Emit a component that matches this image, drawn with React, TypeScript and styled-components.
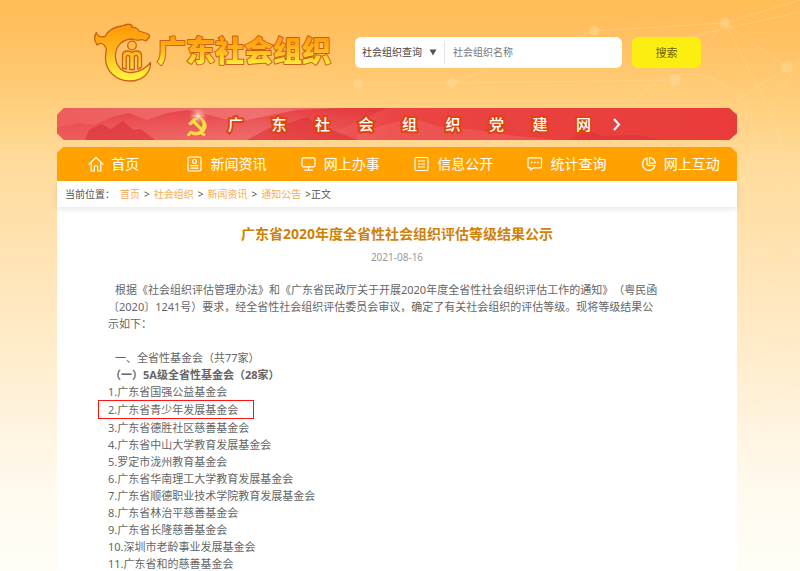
import React from "react";
import styled, { createGlobalStyle } from "styled-components";

const GlobalStyle = createGlobalStyle`
  * { box-sizing: border-box; }
  body {
    margin: 0;
    font-family: "Noto Sans", "Noto Sans CJK SC", sans-serif;
    color: #666;
    text-spacing-trim: space-all;
  }
  h1, h2, p, ol, ul { margin: 0; padding: 0; }
  ol, ul { list-style: none; }
  a { text-decoration: none; color: inherit; }
`;

const Page = styled.div`
  position: relative;
  min-height: 100vh;
  padding: 0 6px 0 0;
  background: linear-gradient(#ffbd56 0, #ffc266 50px, #ffd180 110px, #ffdc9e 170px, #ffe6bc 290px, #fff1d8 400px, #fffaee 490px, #fffdf6 571px);
`;

const Backdrop = styled.svg`
  position: absolute;
  top: 0;
  right: 0;
  width: 460px;
  height: 480px;
  pointer-events: none;
`;

const Column = styled.div`
  position: relative;
  width: 86%;
  max-width: 680px;
  margin: 0 auto;
`;

const Header = styled.header`
  display: flex;
  align-items: center;
  height: 108px;
  padding: 0 36px 4px;
`;

const Brand = styled.a`
  display: flex;
  align-items: center;
  gap: 4px;
  flex: none;
`;

const BrandName = styled.h1`
  display: flex;
  height: 42px;
`;

const BrandLettering = styled.svg`
  overflow: visible;
  font-family: "Noto Sans CJK SC", sans-serif;
  font-size: 29px;
  font-weight: 900;
  fill: url(#lettering);
  stroke: #cb6117;
  stroke-width: 2px;
  stroke-linejoin: round;
  paint-order: stroke fill;
`;

const SearchForm = styled.form`
  display: flex;
  flex: 1;
  gap: 10px;
  margin-left: 24px;
  height: 31px;
`;

const SearchBox = styled.div`
  display: flex;
  align-items: center;
  flex: 1;
  min-width: 0;
  background: #fff;
  border-radius: 6px;
`;

const ScopeField = styled.label`
  display: flex;
  align-items: center;
  position: relative;
  height: 23px;
  border-right: 1px solid #e4e4e4;
`;

const ScopeSelect = styled.select`
  appearance: none;
  width: 89px;
  height: 23px;
  padding: 0 20px 0 7px;
  border: 0;
  background: transparent;
  color: #444;
  font: inherit;
  font-size: 10px;
`;

const ScopeArrow = styled.svg`
  position: absolute;
  right: 7px;
  pointer-events: none;
`;

const Keyword = styled.input`
  flex: 1;
  min-width: 0;
  height: 23px;
  padding: 0 8px;
  border: 0;
  background: transparent;
  font: inherit;
  font-size: 10px;
  color: #444;
  &::placeholder { color: #777; opacity: 1; }
`;

const SearchButton = styled.button`
  width: 69px;
  border: 0;
  border-radius: 6px;
  background: #fdee12;
  color: #6e6410;
  font: inherit;
  font-size: 11px;
`;

const PartyBanner = styled.a`
  position: relative;
  display: flex;
  align-items: center;
  gap: 19px;
  height: 32px;
  padding-left: 129px;
  overflow: hidden;
  background: #ea3f3d;
  clip-path: polygon(7px 0, calc(100% - 8px) 0, 100% 7px, 100% calc(100% - 7px), calc(100% - 8px) 100%, 7px 100%, 0 calc(100% - 7px), 0 7px);
`;

const Mountains = styled.svg`
  position: absolute;
  inset: 0;
  width: 100%;
  height: 100%;
`;

const Emblem = styled.svg`
  position: relative;
  flex: none;
`;

const BannerText = styled.span`
  position: relative;
  display: flex;
  justify-content: space-between;
  width: 363px;
  font-size: 15px;
  line-height: 34px;
  font-weight: 500;
  font-family: "Noto Sans CJK SC", sans-serif;
  color: #fff;
  -webkit-text-stroke: 4px #e0440c;
  paint-order: stroke fill;
`;

const MainNav = styled.nav`
  display: grid;
  grid-template-columns: repeat(6, 1fr);
  height: 34px;
  margin-top: 7px;
  background: #ffa200;
  clip-path: polygon(6px 0, calc(100% - 6px) 0, 100% 6px, 100% 100%, 0 100%, 0 6px);
`;

const NavLink = styled.a`
  display: flex;
  align-items: center;
  justify-content: center;
  gap: 7px;
  color: #fff;
  font-size: 14px;
  line-height: 34px;
  white-space: nowrap;
`;

const NavIcon = styled.svg`
  flex: none;
  fill: none;
  stroke: #fff;
  stroke-width: 1.2;
  stroke-linecap: round;
  stroke-linejoin: round;
`;

const Breadcrumb = styled.nav`
  position: relative;
  display: flex;
  gap: 4px;
  height: 26px;
  padding: 0 8px;
  background: #fff;
  box-shadow: 0 2px 6px rgba(0, 0, 0, 0.1);
  font-size: 10px;
  line-height: 27px;
  color: #555;
`;

const Crumb = styled.a`
  color: #f5ad55;
`;

const Here = styled.span`
  margin-right: 1px;
`;

const Article = styled.article`
  padding: 16px 51px 0;
  background: #fff;
`;

const Title = styled.h2`
  font-size: 14px;
  line-height: 22px;
  font-weight: 700;
  text-align: center;
  color: #cf8108;
`;

const PostDate = styled.time`
  display: block;
  margin-top: 4px;
  font-size: 10px;
  line-height: 16px;
  text-align: center;
  color: #999;
`;

const Body = styled.div`
  margin-top: 16px;
  font-size: 11px;
  line-height: 17px;
  color: #666;
`;

const Paragraph = styled.p<{ $lead?: boolean }>`
  text-indent: 7px;
  margin-bottom: ${(p) => (p.$lead ? "17px" : "0")};
`;

const SectionName = styled.p`
  text-indent: 2px;
  font-weight: 700;
`;

const Entry = styled.li``;

const MarkedEntry = styled.li`
  width: 156px;
  margin-left: -10px;
  padding-left: 9px;
  border: 1px solid #ff1414;
`;

const foundations = [
  "广东省国强公益基金会",
  "广东省青少年发展基金会",
  "广东省德胜社区慈善基金会",
  "广东省中山大学教育发展基金会",
  "罗定市泷州教育基金会",
  "广东省华南理工大学教育发展基金会",
  "广东省顺德职业技术学院教育发展基金会",
  "广东省林治平慈善基金会",
  "广东省长隆慈善基金会",
  "深圳市老龄事业发展基金会",
  "广东省和的慈善基金会",
];

const navItems = [
  {
    label: "首页",
    icon: <path d="M1 8.2 8 1.5l7 6.7M3.2 6.8V15h3.2v-5h3.2v5h3.2V6.8" />,
  },
  {
    label: "新闻资讯",
    icon: (
      <>
        <rect x="1" y="1" width="13" height="14" rx="1.5" />
        <circle cx="7.5" cy="5.4" r="1.9" />
        <path d="M4 9.7h7M4 12.2h7" />
      </>
    ),
  },
  {
    label: "网上办事",
    icon: (
      <>
        <rect x="1" y="1.8" width="13" height="9" rx="1.5" />
        <path d="M7.5 11v3M3.7 14.2h7.6" />
      </>
    ),
  },
  {
    label: "信息公开",
    icon: (
      <>
        <rect x="1" y="1.5" width="13" height="13" rx="1.5" />
        <path d="M4.5 5h6M4.5 8h6M4.5 11h6" />
      </>
    ),
  },
  {
    label: "统计查询",
    icon: (
      <>
        <path d="M2 1.8h11.500a1 1 0 0 1 1 1v8a1 1 0 0 1-1 1H6.500L3.500 14v-2.200H2a1 1 0 0 1-1-1v-8a1 1 0 0 1 1-1z" />
        <path d="M4.600 6.500h.2M7.700 6.500h.2M10.800 6.500h.2" strokeWidth="1.600" />
      </>
    ),
  },
  {
    label: "网上互动",
    icon: (
      <>
        <path d="M6 2A6.300 6.300 0 1 0 14 9.500" />
        <path d="M6 2V8.500L8 9.500H14" />
        <path d="M8.500 1.500V7.200H14.200A5.900 5.900 0 0 0 8.500 1.500z" />
      </>
    ),
  },
];

const crumbs = ["首页", "社会组织", "新闻资讯", "通知公告"];

function BrandMark() {
  return (
    <svg width="60" height="60" viewBox="0 0 60 60" aria-hidden="true">
      <defs>
        <linearGradient id="gold" gradientUnits="userSpaceOnUse" x1="0" y1="4" x2="0" y2="56">
          <stop offset="0" stopColor="#ff9a05" />
          <stop offset="0.5" stopColor="#ffb81e" />
          <stop offset="1" stopColor="#fff23c" />
        </linearGradient>
      </defs>
      <g fill="url(#gold)" stroke="#cb6117" strokeWidth="1.300" strokeLinejoin="round">
        <path d="M4 23C1 18 .8 14 3.500 10.500 4 14 7 15.500 12 14.500 15 9 21 4.500 29 4 33 2 37 2 39 3.500L39 5.500C42 5 44.500 6.500 46 9L54 11.500C57 13 57.500 15 55 16.500L53 19 49 17.500C46 19 42 17.500 38 17 28 18 22 25 22.500 35 23 45 30 51 39 50.500 47 50 53 46 57.500 40.500 58 51 49 59 37 59 23 59 13 49 12.500 37 12.300 32 14 28 13 26 11 21 7 20 4 23z" />
        <circle cx="39" cy="23.500" r="4.300" fill="#ffbf45" />
        <path d="M29.500 46V33.500C29.500 30.500 31.500 29 34.500 29 36.500 29 38 29.500 39 30.500 40 29.500 41.500 29 43.500 29 46.500 29 48.500 30.500 48.500 33.500V45C47 46.500 45 47 44.800 47V35C44.500 33 41.500 33 41.300 35V47.500H36.700V35C36.500 33 33.500 33 33.200 35V47z" />
      </g>
    </svg>
  );
}

export default function App() {
  return (
    <>
      <GlobalStyle />
      <Page lang="zh-CN">
        <Backdrop viewBox="0 0 460 480" aria-hidden="true">
          <g fill="none" stroke="#ffe3a8" strokeOpacity="0.3">
            <path d="M18 84 112 83 254 31 385 23 447 67 375 115M112 83 335 80 385 23 460 0M335 80 300 48 460 12M385 23 430 110 460 60M430 110 460 200M395 205 460 180M395 180 440 255 460 240M395 325 460 350M395 365 460 340M395 410 460 385M410 280 460 285" />
            <circle cx="348" cy="140" r="66" />
          </g>
          <g fill="#ffe3a8" fillOpacity="0.35">
            <circle cx="18" cy="84" r="5" />
            <circle cx="112" cy="83" r="5" />
            <circle cx="254" cy="31" r="5" />
            <circle cx="385" cy="23" r="5" />
            <circle cx="447" cy="67" r="6" />
            <circle cx="335" cy="80" r="6" />
            <circle cx="405" cy="182" r="5" />
            <circle cx="441" cy="257" r="6" />
          </g>
        </Backdrop>
        <Column>
          <Header>
            <Brand href="#">
              <BrandMark />
              <BrandName>
                <BrandLettering width="174" height="42">
                  <defs>
                    <linearGradient id="lettering" gradientUnits="userSpaceOnUse" x1="0" y1="6" x2="0" y2="34">
                      <stop offset="0" stopColor="#ff9a05" />
                      <stop offset="0.5" stopColor="#ffb81e" />
                      <stop offset="1" stopColor="#fff23c" />
                    </linearGradient>
                  </defs>
                  <text x="0" y="31">广东社会组织</text>
                </BrandLettering>
              </BrandName>
            </Brand>
            <SearchForm>
              <SearchBox>
                <ScopeField>
                  <ScopeSelect aria-label="查询范围">
                    <option>社会组织查询</option>
                  </ScopeSelect>
                  <ScopeArrow width="8" height="7" viewBox="0 0 8 7" aria-hidden="true">
                    <path d="M.5.500h7L4 6.500z" fill="#555" />
                  </ScopeArrow>
                </ScopeField>
                <Keyword type="text" aria-label="社会组织名称" placeholder="社会组织名称" />
              </SearchBox>
              <SearchButton type="button">搜索</SearchButton>
            </SearchForm>
          </Header>

          <PartyBanner href="#">
            <Mountains viewBox="0 0 680 32" preserveAspectRatio="none" aria-hidden="true">
              <defs>
                <linearGradient id="mist" x1="0" x2="1">
                  <stop offset="0" stopColor="#ee5c5c" />
                  <stop offset="0.3" stopColor="#f07070" />
                  <stop offset="0.5" stopColor="#ea4443" />
                  <stop offset="1" stopColor="#e93c3a" />
                </linearGradient>
                <linearGradient id="ridge" x1="0" y1="0" x2="0" y2="1">
                  <stop offset="0" stopColor="#e02f35" stopOpacity="0.7" />
                  <stop offset="1" stopColor="#e84a4c" stopOpacity="0.1" />
                </linearGradient>
              </defs>
              <rect width="680" height="32" fill="url(#mist)" />
              <path d="M0 20 22 15 36 17 58 8 72 5 90 12 110 5 130 2 160 9 180 14 210 8 240 2 290 0H330L300 14 260 32H0z" fill="url(#ridge)" />
              <path d="M28 32 32 22 44 16 54 21 60 17 66 13 76 22 84 21 98 32z" fill="#d92f38" fillOpacity="0.6" />
              <path d="M190 32 212 20 232 15 250 9 264 18 285 26 300 32z" fill="#dc2d32" fillOpacity="0.55" />
              <path d="M300 26 330 16 355 10 380 18 420 22 460 28 500 32H300z" fill="#f47b78" fillOpacity="0.3" />
              <path d="M512 32 522 26 534 24 545 28 580 27 605 32z" fill="#d92f38" fillOpacity="0.5" />
            </Mountains>
            <Emblem width="23" height="30" viewBox="0 0 23 30" aria-hidden="true">
              <defs>
                <radialGradient id="flare">
                  <stop offset="0" stopColor="#fff" stopOpacity="0.9" />
                  <stop offset="0.300" stopColor="#ffd0a8" stopOpacity="0.6" />
                  <stop offset="1" stopColor="#ff9b80" stopOpacity="0" />
                </radialGradient>
              </defs>
              <circle cx="12" cy="7" r="9" fill="url(#flare)" />
              <path d="M12 0 12.600 6.400 20 7 12.600 7.600 12 13 11.400 7.600 4 7 11.400 6.400z" fill="#ffe3c8" fillOpacity="0.8" />
              <g fill="#f9df45" stroke="#f9df45" strokeWidth="0.900" strokeLinejoin="round">
                <path d="M13.500 8.500C21.500 11 22 20 16.500 23.500L19.500 25.500 18 27 14.500 24.800C11 26.600 7 26.200 5 24.600L3.500 26.500C2 27.500 .8 26 2 25L4.500 22C8 24.200 12.500 23.800 15 21 17.800 17 17.300 12 13.500 8.500z" />
                <path d="M2.500 14.500 8 9.500 11 9.800 8.700 12 18.800 21.600 17 23.300 7 13.800 4.700 16.200z" />
              </g>
            </Emblem>
            <BannerText>
              {Array.from("广东社会组织党建网").map((ch) => (
                <span key={ch}>{ch}</span>
              ))}
            </BannerText>
            <Emblem width="12" height="14" viewBox="0 0 12 14" aria-hidden="true">
              <path d="M4 2 9 7.500 4 13" fill="none" stroke="#fff" strokeWidth="2" />
            </Emblem>
          </PartyBanner>

          <MainNav aria-label="主导航">
            {navItems.map((item) => (
              <NavLink href="#" key={item.label}>
                <NavIcon width="16" height="16" viewBox="0 0 16 16" aria-hidden="true">
                  {item.icon}
                </NavIcon>
                {item.label}
              </NavLink>
            ))}
          </MainNav>

          <Breadcrumb aria-label="当前位置">
            <Here>当前位置：</Here>
            {crumbs.map((name, i) => (
              <React.Fragment key={name}>
                <Crumb href="#">{name}</Crumb>
                <span>{i < crumbs.length - 1 ? ">" : ">正文"}</span>
              </React.Fragment>
            ))}
          </Breadcrumb>

          <Article>
            <Title>广东省2020年度全省性社会组织评估等级结果公示</Title>
            <PostDate dateTime="2021-08-16">2021-08-16</PostDate>
            <Body>
              <Paragraph $lead>
                根据《社会组织评估管理办法》和《广东省民政厅关于开展2020年度全省性社会组织评估工作的通知》（粤民函
                <br />
                〔2020〕1241号）要求，经全省性社会组织评估委员会审议，确定了有关社会组织的评估等级。现将等级结果公
                <br />
                示如下：
              </Paragraph>
              <Paragraph>一、全省性基金会（共77家）</Paragraph>
              <SectionName>（一）5A级全省性基金会（28家）</SectionName>
              <ol>
                {foundations.map((name, i) => {
                  const Row = i === 1 ? MarkedEntry : Entry;
                  return (
                    <Row key={name}>
                      {i + 1}.{name}
                    </Row>
                  );
                })}
              </ol>
            </Body>
          </Article>
        </Column>
      </Page>
    </>
  );
}
